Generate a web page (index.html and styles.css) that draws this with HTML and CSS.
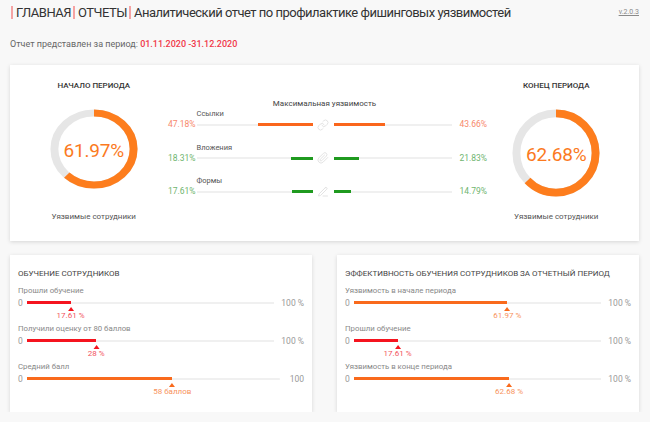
FILE: index.html
```html
<!DOCTYPE html>
<html lang="ru">
<head>
<meta charset="utf-8">
<title>Аналитический отчет</title>
<link rel="stylesheet" href="styles.css">
</head>
<body>
<div class="page">
  <header class="topbar">
    <nav class="crumbs">
      <span class="crumb">ГЛАВНАЯ</span>
      <span class="crumb">ОТЧЕТЫ</span>
      <span class="crumb">Аналитический отчет по профилактике фишинговых уязвимостей</span>
    </nav>
    <a class="version">v.2.0.3</a>
  </header>
  <p class="period">Отчет представлен за период: <b>01.11.2020 -31.12.2020</b></p>

  <section class="card summary">
    <div class="period-col period-start">
      <h3 class="col-title">НАЧАЛО ПЕРИОДА</h3>
      <div class="donut-box">
        <div class="donut donut-low">
          <svg class="donut-svg" viewBox="0 0 100 100" preserveAspectRatio="none">
            <circle cx="50" cy="50" r="45" fill="none" stroke="#e6e6e6" stroke-width="9"/>
            <circle cx="50" cy="50" r="45" fill="none" stroke="#fd7d1d" stroke-width="9" stroke-dasharray="175.2 282.74" transform="rotate(-90 50 50)"/>
          </svg>
          <span class="donut-value">61.97%</span>
        </div>
      </div>
      <p class="donut-caption">Уязвимые сотрудники</p>
    </div>

    <div class="compare">
      <div class="compare-title">Максимальная уязвимость</div>
      <div class="vrow">
        <span class="vlabel">Ссылки</span>
        <span class="pct pct-l warn">47.18%</span>
        <div class="vtrack vtrack-l"><i class="vfill orange" style="width:47.18%"></i></div>
        <svg class="vicon" viewBox="0 0 24 24"><path d="M10 13a5 5 0 0 0 7.54.54l3-3a5 5 0 0 0-7.07-7.07l-1.72 1.71"/><path d="M14 11a5 5 0 0 0-7.54-.54l-3 3a5 5 0 0 0 7.07 7.07l1.71-1.71"/></svg>
        <div class="vtrack"><i class="vfill orange" style="width:43.66%"></i></div>
        <span class="pct pct-r warn">43.66%</span>
      </div>
      <div class="vrow">
        <span class="vlabel">Вложения</span>
        <span class="pct pct-l ok">18.31%</span>
        <div class="vtrack vtrack-l"><i class="vfill green" style="width:18.31%"></i></div>
        <svg class="vicon" viewBox="0 0 24 24"><path d="M21.44 11.05l-9.19 9.19a6 6 0 0 1-8.49-8.49l9.19-9.19a4 4 0 0 1 5.66 5.66l-9.2 9.19a2 2 0 0 1-2.83-2.83l8.49-8.48"/></svg>
        <div class="vtrack"><i class="vfill green" style="width:21.83%"></i></div>
        <span class="pct pct-r ok">21.83%</span>
      </div>
      <div class="vrow">
        <span class="vlabel">Формы</span>
        <span class="pct pct-l ok">17.61%</span>
        <div class="vtrack vtrack-l"><i class="vfill green" style="width:17.61%"></i></div>
        <svg class="vicon" viewBox="0 0 24 24"><path d="M12 20h9"/><path d="M16.5 3.5a2.121 2.121 0 0 1 3 3L7 19l-4 1 1-4L16.5 3.5z"/></svg>
        <div class="vtrack"><i class="vfill green" style="width:14.79%"></i></div>
        <span class="pct pct-r ok">14.79%</span>
      </div>
    </div>

    <div class="period-col period-end">
      <h3 class="col-title">КОНЕЦ ПЕРИОДА</h3>
      <div class="donut-box">
        <div class="donut">
          <svg class="donut-svg" viewBox="0 0 100 100" preserveAspectRatio="none">
            <circle cx="50" cy="50" r="45" fill="none" stroke="#e6e6e6" stroke-width="9"/>
            <circle cx="50" cy="50" r="45" fill="none" stroke="#fd7d1d" stroke-width="9" stroke-dasharray="177.2 282.74" transform="rotate(-90 50 50)"/>
          </svg>
          <span class="donut-value">62.68%</span>
        </div>
      </div>
      <p class="donut-caption">Уязвимые сотрудники</p>
    </div>
  </section>

  <div class="bottom">
    <section class="card training">
      <h3 class="card-title">ОБУЧЕНИЕ СОТРУДНИКОВ</h3>
      <div class="metric">
        <div class="metric-label">Прошли обучение</div>
        <div class="scale">
          <span class="scale-min">0</span>
          <div class="scale-track"><i class="scale-fill red" style="width:17.61%"></i><span class="marker red" style="left:17.61%">17.61 %</span></div>
          <span class="scale-max">100 %</span>
        </div>
      </div>
      <div class="metric">
        <div class="metric-label">Получили оценку от 80 баллов</div>
        <div class="scale">
          <span class="scale-min">0</span>
          <div class="scale-track"><i class="scale-fill red" style="width:28%"></i><span class="marker red" style="left:28%">28 %</span></div>
          <span class="scale-max">100 %</span>
        </div>
      </div>
      <div class="metric">
        <div class="metric-label">Средний балл</div>
        <div class="scale">
          <span class="scale-min">0</span>
          <div class="scale-track"><i class="scale-fill orange" style="width:57.5%"></i><span class="marker orange" style="left:57.5%">58 баллов</span></div>
          <span class="scale-max scale-max-wide">100</span>
        </div>
      </div>
    </section>

    <section class="card training">
      <h3 class="card-title">ЭФФЕКТИВНОСТЬ ОБУЧЕНИЯ СОТРУДНИКОВ ЗА ОТЧЕТНЫЙ ПЕРИОД</h3>
      <div class="metric">
        <div class="metric-label">Уязвимость в начале периода</div>
        <div class="scale">
          <span class="scale-min">0</span>
          <div class="scale-track"><i class="scale-fill orange" style="width:61.97%"></i><span class="marker orange" style="left:61.97%">61.97 %</span></div>
          <span class="scale-max">100 %</span>
        </div>
      </div>
      <div class="metric">
        <div class="metric-label">Прошли обучение</div>
        <div class="scale">
          <span class="scale-min">0</span>
          <div class="scale-track"><i class="scale-fill red" style="width:17.61%"></i><span class="marker red" style="left:17.61%">17.61 %</span></div>
          <span class="scale-max">100 %</span>
        </div>
      </div>
      <div class="metric">
        <div class="metric-label">Уязвимость в конце периода</div>
        <div class="scale">
          <span class="scale-min">0</span>
          <div class="scale-track"><i class="scale-fill orange" style="width:62.68%"></i><span class="marker orange" style="left:62.68%">62.68 %</span></div>
          <span class="scale-max">100 %</span>
        </div>
      </div>
    </section>
  </div>
</div>
</body>
</html>
```

FILE: styles.css
```css
* { box-sizing: border-box; }

html, body {
  margin: 0;
  padding: 0;
  background: #f8f8f8;
  font-family: Roboto, "Noto Sans", sans-serif;
  color: #333;
}

.page {
  padding: 6px 11px 0 10px;
}

/* header */
.topbar {
  display: flex;
  align-items: flex-start;
  justify-content: space-between;
}

.crumbs {
  display: flex;
  align-items: center;
}

.crumb {
  font-size: 13px;
  line-height: 13px;
  letter-spacing: -0.5px;
  color: #333;
  border-left: 2px solid #f5a3a3;
  padding: 0 2px 0 3px;
}
.crumb:first-child { margin-left: 1px; }

.version {
  font-size: 7px;
  line-height: 13px;
  color: #8a8a8a;
  text-decoration: underline;
}

.period {
  margin: 19px 0 0 0;
  font-size: 9px;
  line-height: 12px;
  color: #666;
}
.period b {
  color: #f0394a;
  font-weight: 500;
  font-size: 9px;
}

/* cards */
.card {
  background: #fff;
  box-shadow: 0 1px 4px rgba(0, 0, 0, 0.14);
}

.summary {
  margin-top: 15px;
  height: 176px;
  display: grid;
  grid-template-columns: 1fr 322px 1fr;
}

.period-col {
  display: flex;
  flex-direction: column;
  align-items: center;
  padding-top: 15px;
}
.period-start { padding-left: 14px; }
.period-end { padding-right: 12px; }

.col-title {
  margin: 0;
  font-size: 8px;
  line-height: 11px;
  font-weight: 500;
  color: #333;
}

.donut-box {
  margin-top: 18px;
  height: 88px;
  display: flex;
  align-items: flex-start;
}

.donut {
  display: grid;
  place-items: center;
  width: 88px;
  height: 88px;
}
.donut-low { height: 80px; }

.donut-svg,
.donut-value {
  grid-area: 1 / 1;
}
.donut-svg {
  width: 100%;
  height: 100%;
}
.donut-value {
  font-size: 19px;
  color: #fb7a1e;
  letter-spacing: -0.2px;
  margin-top: 2px;
}

.donut-caption {
  margin: 14px 0 0 0;
  font-size: 8px;
  line-height: 11px;
  color: #555;
}

/* comparison */
.compare {
  padding-top: 33px;
}

.compare-title {
  text-align: center;
  font-size: 8px;
  line-height: 11px;
  color: #444;
}

.vrow {
  display: grid;
  grid-template-columns: 33px 116px 21px 118px 34px;
  grid-template-rows: 10px 11px;
  margin-bottom: 12.5px;
  align-items: center;
}

.vlabel {
  grid-column: 2 / 5;
  grid-row: 1;
  font-size: 7.5px;
  line-height: 10px;
  color: #555;
}

.pct {
  grid-row: 2;
  font-size: 8.5px;
  line-height: 11px;
}
.pct-l { text-align: right; padding-right: 1px; }
.pct-r { padding-left: 8px; }
.warn { color: #f7896c; }
.ok { color: #6fb56f; }

.vtrack {
  grid-row: 2;
  height: 3px;
  display: flex;
  background: linear-gradient(#f0f0f0, #f0f0f0) center / 100% 2px no-repeat;
}
.vtrack-l { justify-content: flex-end; }

.vfill {
  display: block;
  height: 3px;
}
.vfill.orange { background: #fa661c; }
.vfill.green { background: #1f9a1f; }

.vicon {
  grid-row: 2;
  justify-self: center;
  width: 12px;
  height: 12px;
  fill: none;
  stroke: #e3e3e3;
  stroke-width: 2;
  stroke-linecap: round;
  stroke-linejoin: round;
}

/* bottom cards */
.bottom {
  margin-top: 14px;
  display: grid;
  grid-template-columns: 302px 302px;
  column-gap: 25px;
}

.training {
  height: 157px;
  padding: 14px 8px 0 8px;
}

.card-title {
  margin: 0 0 6.5px 0;
  font-size: 8px;
  line-height: 10px;
  font-weight: 400;
  color: #444;
}

.metric {
  padding-bottom: 14px;
  margin-bottom: 2px;
}

.metric-label {
  font-size: 7.8px;
  line-height: 10px;
  color: #888;
  margin-bottom: 2px;
}

.scale {
  display: flex;
  align-items: center;
  height: 10px;
}

.scale-min {
  width: 9px;
  font-size: 8.5px;
  color: #999;
}

.scale-track {
  position: relative;
  flex: 1;
  height: 3px;
  background: linear-gradient(#f0f0f0, #f0f0f0) center / 100% 2px no-repeat;
}

.scale-fill {
  display: block;
  height: 3px;
}
.scale-fill.red { background: #f5141f; }
.scale-fill.orange { background: #f96a1c; }

.scale-max {
  margin-left: 7px;
  font-size: 8.5px;
  color: #999;
}
.scale-max-wide { margin-left: 10px; }

.marker {
  position: absolute;
  top: 6px;
  transform: translateX(-50%);
  display: flex;
  flex-direction: column;
  align-items: center;
  font-size: 8px;
  line-height: 10px;
  white-space: nowrap;
}
.marker::before {
  content: "";
  width: 0;
  height: 0;
  border-left: 3px solid transparent;
  border-right: 3px solid transparent;
  border-bottom: 4px solid currentColor;
}
.marker.red { color: #f2545c; }
.marker.red::before { border-bottom-color: #f5141f; }
.marker.orange { color: #f7925c; }
.marker.orange::before { border-bottom-color: #f96a1c; }
```
